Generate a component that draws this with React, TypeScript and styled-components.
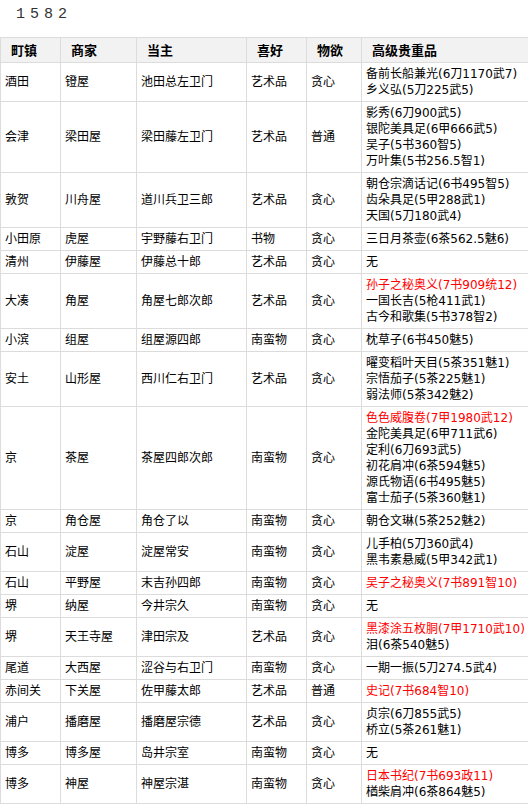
import React from "react";
import styled, { createGlobalStyle } from "styled-components";

const Global = createGlobalStyle`
  html, body { margin: 0; padding: 0; overflow: hidden; background: #fff; }
  body { font-family: "DejaVu Sans", "Noto Sans CJK SC", sans-serif; color: #000; }
`;

const Page = styled.div`
  width: 528px;
  overflow: hidden;
`;

const Title = styled.div`
  height: 37px;
  line-height: 30px;
  padding-left: 16px;
  font-family: "Liberation Mono", "DejaVu Sans Mono", monospace;
  font-size: 15px;
  letter-spacing: 5px;
  color: #333;
`;

const Table = styled.table`
  border-collapse: collapse;
  table-layout: fixed;
  width: 532px;
  font-size: 12px;
`;

const Th = styled.th`
  border: 1px solid #dcdcdc;
  background: #f2f2f2;
  font-family: "Noto Sans CJK SC", sans-serif;
  font-size: 13px;
  font-weight: bold;
  text-align: left;
  padding: 3px 10px;
  line-height: 18px;
  white-space: nowrap;
`;

const Td = styled.td`
  border: 1px solid #dcdcdc;
  padding: 3px 4px;
  line-height: 16px;
  vertical-align: middle;
  white-space: nowrap;
  font-family: "DejaVu Sans", "Noto Sans CJK SC", sans-serif;
`;

const Line = styled.div<{ $red?: boolean }>`
  color: ${(p) => (p.$red ? "#f00" : "#000")};
`;

type Row = [string, string, string, string, string, string[]];

const R = "!";

const rows: Row[] = [
  ["酒田", "镫屋", "池田总左卫门", "艺术品", "贪心", ["备前长船兼光(6刀1170武7)", "乡义弘(5刀225武5)"]],
  ["会津", "梁田屋", "梁田藤左卫门", "艺术品", "普通", ["影秀(6刀900武5)", "银陀美具足(6甲666武5)", "吴子(5书360智5)", "万叶集(5书256.5智1)"]],
  ["敦贺", "川舟屋", "道川兵卫三郎", "艺术品", "贪心", ["朝仓宗滴话记(6书495智5)", "齿朵具足(5甲288武1)", "天国(5刀180武4)"]],
  ["小田原", "虎屋", "宇野藤右卫门", "书物", "贪心", ["三日月茶壶(6茶562.5魅6)"]],
  ["清州", "伊藤屋", "伊藤总十郎", "艺术品", "贪心", ["无"]],
  ["大凑", "角屋", "角屋七郎次郎", "艺术品", "贪心", [R + "孙子之秘奥义(7书909统12)", "一国长吉(5枪411武1)", "古今和歌集(5书378智2)"]],
  ["小滨", "组屋", "组屋源四郎", "南蛮物", "贪心", ["枕草子(6书450魅5)"]],
  ["安土", "山形屋", "西川仁右卫门", "艺术品", "贪心", ["曜变稻叶天目(5茶351魅1)", "宗悟茄子(5茶225魅1)", "弱法师(5茶342魅2)"]],
  ["京", "茶屋", "茶屋四郎次郎", "南蛮物", "贪心", [R + "色色威腹卷(7甲1980武12)", "金陀美具足(6甲711武6)", "定利(6刀693武5)", "初花肩冲(6茶594魅5)", "源氏物语(6书495魅5)", "富士茄子(5茶360魅1)"]],
  ["京", "角仓屋", "角仓了以", "南蛮物", "贪心", ["朝仓文琳(5茶252魅2)"]],
  ["石山", "淀屋", "淀屋常安", "南蛮物", "贪心", ["儿手柏(5刀360武4)", "黑韦素悬威(5甲342武1)"]],
  ["石山", "平野屋", "末吉孙四郎", "南蛮物", "贪心", [R + "吴子之秘奥义(7书891智10)"]],
  ["堺", "纳屋", "今井宗久", "南蛮物", "贪心", ["无"]],
  ["堺", "天王寺屋", "津田宗及", "艺术品", "贪心", [R + "黑漆涂五枚胴(7甲1710武10)", "泪(6茶540魅5)"]],
  ["尾道", "大西屋", "涩谷与右卫门", "南蛮物", "贪心", ["一期一振(5刀274.5武4)"]],
  ["赤间关", "下关屋", "佐甲藤太郎", "艺术品", "普通", [R + "史记(7书684智10)"]],
  ["浦户", "播磨屋", "播磨屋宗德", "艺术品", "贪心", ["贞宗(6刀855武5)", "桥立(5茶261魅1)"]],
  ["博多", "博多屋", "岛井宗室", "南蛮物", "贪心", ["无"]],
  ["博多", "神屋", "神屋宗湛", "南蛮物", "贪心", [R + "日本书纪(7书693政11)", "楢柴肩冲(6茶864魅5)"]],
];

const headers = ["町镇", "商家", "当主", "喜好", "物欲", "高级贵重品"];
const widths = [60, 76, 110, 60, 55, 171];

export default function App() {
  return (
    <Page>
      <Global />
      <Title>1582</Title>
      <Table>
        <colgroup>
          {widths.map((w, i) => (
            <col key={i} style={{ width: w }} />
          ))}
        </colgroup>
        <thead>
          <tr>
            {headers.map((h) => (
              <Th key={h}>{h}</Th>
            ))}
          </tr>
        </thead>
        <tbody>
          {rows.map((r, i) => (
            <tr key={i}>
              <Td>{r[0]}</Td>
              <Td>{r[1]}</Td>
              <Td>{r[2]}</Td>
              <Td>{r[3]}</Td>
              <Td>{r[4]}</Td>
              <Td>
                {r[5].map((t, j) => (
                  <Line key={j} $red={t.startsWith(R)}>
                    {t.startsWith(R) ? t.slice(1) : t}
                  </Line>
                ))}
              </Td>
            </tr>
          ))}
        </tbody>
      </Table>
    </Page>
  );
}
